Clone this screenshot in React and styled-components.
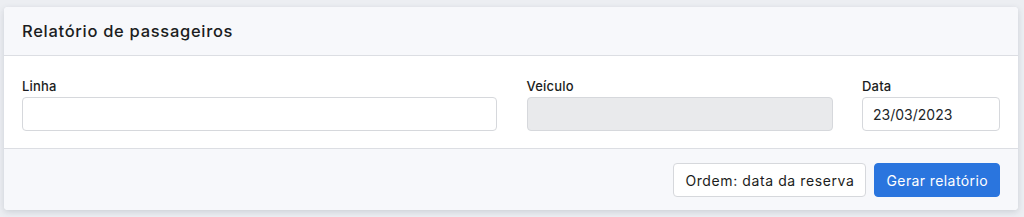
import React from "react";
import styled, { createGlobalStyle } from "styled-components";

const GlobalStyle = createGlobalStyle`
    body {
        margin: 0;
        background: #eceef2;
        font-family: "Inter", "Noto Sans", sans-serif;
        color: #212529;
    }
`;

export default function App() {
    return (
        <Page>
            <GlobalStyle />
            <Card>
                <Header>Relatório de passageiros</Header>
                <Body>
                    <Field>
                        <Label>Linha</Label>
                        <Input type="text" />
                    </Field>
                    <Field>
                        <Label>Veículo</Label>
                        <Input type="text" disabled />
                    </Field>
                    <Field>
                        <Label>Data</Label>
                        <Input type="text" defaultValue="23/03/2023" />
                    </Field>
                </Body>
                <Footer>
                    <Button>Ordem: data da reserva</Button>
                    <Button $primary>Gerar relatório</Button>
                </Footer>
            </Card>
        </Page>
    );
}

const Page = styled.div`
    padding: 7px 6px 7px 4px;
`;

const Card = styled.div`
    background: #fff;
    border-radius: 4px;
    box-shadow: 0 2px 6px rgba(60, 70, 90, 0.18);
    overflow: hidden;
`;

const Header = styled.div`
    height: 48px;
    display: flex;
    align-items: center;
    padding: 0 18px;
    background: #f7f8fb;
    border-bottom: 1px solid #dcdee3;
    font-size: 16.5px;
    font-weight: 500;
    color: #1b1d21;
    letter-spacing: 0.7px;
`;

const Body = styled.div`
    display: grid;
    grid-template-columns: 475px 306px 138px;
    justify-content: space-between;
    padding: 22px 18px 17px;
`;

const Field = styled.div`
    display: flex;
    flex-direction: column;
    gap: 3px;
`;

const Label = styled.label`
    font-size: 13px;
    font-weight: 500;
    color: #1b1d21;
    line-height: 16px;
    letter-spacing: 0.2px;
`;

const Input = styled.input`
    box-sizing: border-box;
    height: 34px;
    padding: 0 10px;
    border: 1px solid #d6d8dc;
    border-radius: 4px;
    background: #fff;
    font-family: inherit;
    font-size: 14px;
    color: #212529;
    outline: none;
    &:disabled {
        background: #e9eaec;
    }
`;

const Footer = styled.div`
    display: flex;
    justify-content: flex-end;
    gap: 8px;
    padding: 14px 18px 13px;
    background: #f7f8fb;
    border-top: 1px solid #dcdee3;
`;

const Button = styled.button`
    height: 34px;
    padding: 0 11px;
    border-radius: 4px;
    font-family: inherit;
    font-size: 14px;
    letter-spacing: ${(p) => (p.$primary ? "0.4px" : "0.6px")};
    cursor: pointer;
    border: 1px solid ${(p) => (p.$primary ? "#2a75de" : "#d6d8dc")};
    background: ${(p) => (p.$primary ? "#2a75de" : "#fff")};
    color: ${(p) => (p.$primary ? "#fff" : "#1b1d21")};
`;
